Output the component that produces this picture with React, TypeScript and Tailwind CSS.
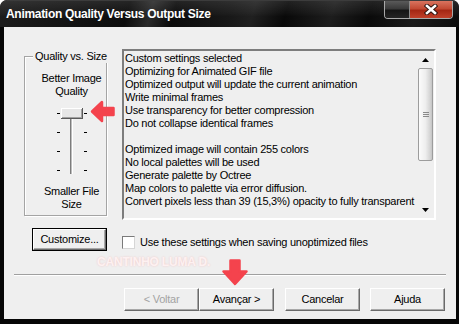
import React from "react";

function Btn({
  children,
  disabled,
  className = "",
}: {
  children: React.ReactNode;
  disabled?: boolean;
  className?: string;
}) {
  return (
    <div
      className={`h-[23px] w-[75px] flex items-center justify-center bg-[#efefef] border border-t-white border-l-white border-r-[#6a6a6a] border-b-[#6a6a6a] shadow-[inset_-1px_-1px_0_#a8a8a8] ${
        disabled ? "text-[#a3a3a3]" : "text-black"
      } ${className}`}
    >
      {children}
    </div>
  );
}

const lines = [
  "Custom settings selected",
  "Optimizing for Animated GIF file",
  "Optimized output will update the current animation",
  "Write minimal frames",
  "Use transparency for better compression",
  "Do not collapse identical frames",
  "",
  "Optimized image will contain 255 colors",
  "No local palettes will be used",
  "Generate palette by Octree",
  "Map colors to palette via error diffusion.",
  "Convert pixels less than 39 (15,3%) opacity to fully transparent",
];

export default function App() {
  return (
    <div className="w-[459px] h-[324px] bg-[#060606] rounded-t-[7px] flex flex-col relative overflow-hidden font-[family-name:'Liberation_Sans',Arial,sans-serif] text-[11px] leading-[13px] tracking-[-0.25px] text-black">
      {/* Title bar */}
      <div className="h-[27px] shrink-0 flex items-start justify-between rounded-t-[7px] bg-[linear-gradient(180deg,rgba(255,255,255,0.10)_0%,rgba(255,255,255,0.03)_45%,rgba(0,0,0,0)_60%),linear-gradient(105deg,#1c1c1c_0%,#0d0d0d_28%,#2a2a2a_33%,#0b0b0b_38%,#181818_50%,#202020_55%,#090909_62%,#1d1d1d_72%,#0a0a0a_80%,#1a1a1a_90%,#0c0c0c_100%)] border-t border-[#3c3c3c]">
        <div className="pl-[6px] pt-[6px] text-white font-bold text-[12px] leading-[14px] tracking-[-0.3px] whitespace-nowrap">
          Animation Quality Versus Output Size
        </div>
        <div className="flex mr-[6px] h-[18px] rounded-b-[4px] border border-t-0 border-[#a9a9a9] overflow-hidden">
          <div className="w-[25px] bg-[linear-gradient(180deg,#5a5a5a_0%,#3a3a3a_45%,#151515_55%,#242424_100%)] border-r border-[#8a8a8a]" />
          <div className="w-[42px] flex items-center justify-center bg-[linear-gradient(180deg,#d9745f_0%,#c24a33_45%,#a52714_55%,#c0402a_100%)]">
            <svg width="14" height="11" viewBox="0 0 14 11">
              <path d="M3 2 L11 9 M11 2 L3 9" stroke="#2a120e" strokeWidth="4.4" strokeLinecap="square" />
              <path d="M3 2 L11 9 M11 2 L3 9" stroke="#ffffff" strokeWidth="2.6" strokeLinecap="square" />
            </svg>
          </div>
        </div>
      </div>

      {/* Client area */}
      <div className="ml-[4px] mr-[3px] mb-[5px] flex-1 bg-[#efefef] flex flex-col relative">
        <div className="pt-[22px] pl-[20px] flex items-start">
          {/* Group box */}
          <div className="relative mt-[7px] w-[83px] h-[160px] border border-[#a4a4a4] shadow-[inset_1px_1px_0_#ffffff,1px_1px_0_#ffffff]">
            <div className="absolute left-[8px] -top-[7px] px-[2px] bg-[#efefef] whitespace-nowrap">Quality vs. Size</div>
            <div className="pl-[12px] pt-[15px] flex flex-col items-center text-center whitespace-nowrap">
              <div>Better Image</div>
              <div>Quality</div>
              <svg width="32" height="67" viewBox="0 0 32 67" className="mt-[10px]" shapeRendering="crispEdges">
                {[5, 24, 43, 62].map((y) => (
                  <g key={y}>
                    <rect x="1" y={y} width="3" height="1" fill="#000" />
                    <rect x="28" y={y} width="3" height="1" fill="#000" />
                  </g>
                ))}
                <rect x="14" y="10" width="1" height="56" fill="#7c7c7c" />
                <rect x="15" y="10" width="1" height="56" fill="#bdbdbd" />
                <rect x="16" y="10" width="1" height="56" fill="#ffffff" />
                <rect x="5" y="0" width="22" height="11" fill="#e6e6e6" />
                <rect x="5" y="0" width="22" height="1" fill="#ffffff" />
                <rect x="5" y="0" width="1" height="11" fill="#ffffff" />
                <rect x="5" y="10" width="22" height="1" fill="#5a5a5a" />
                <rect x="26" y="0" width="1" height="11" fill="#5a5a5a" />
                <rect x="6" y="9" width="20" height="1" fill="#a0a0a0" />
                <rect x="25" y="1" width="1" height="9" fill="#a0a0a0" />
              </svg>
              <div className="mt-[10px]">Smaller File</div>
              <div>Size</div>
            </div>
          </div>

          {/* List box */}
          <div className="ml-[15px] w-[314px] h-[171px] flex border-2 border-t-[#7d7d7d] border-l-[#7d7d7d] border-r-white border-b-white">
            <div className="flex-1 pt-[1px] pl-[1px] whitespace-nowrap overflow-hidden">
              {lines.map((l, i) => (
                <div key={i} className="h-[13px]">
                  {l}
                </div>
              ))}
            </div>
            <div className="w-[17px] flex flex-col">
              <div className="h-[17px] flex items-center justify-center">
                <svg width="7" height="4" viewBox="0 0 7 4">
                  <path d="M3.5 0 L7 4 L0 4 Z" fill="#000" />
                </svg>
              </div>
              <div className="mx-[1px] h-[93px] rounded-[2px] border border-[#9c9c9c] bg-[linear-gradient(90deg,#fbfbfb_0%,#eeeeee_50%,#d4d4d4_85%,#c4c4c4_100%)] flex items-center justify-center">
                <div className="flex flex-col gap-[1px]">
                  <div className="w-[6px] h-[1px] bg-[#8a8a8a]" />
                  <div className="w-[6px] h-[1px] bg-[#8a8a8a]" />
                  <div className="w-[6px] h-[1px] bg-[#8a8a8a]" />
                </div>
              </div>
              <div className="flex-1" />
              <div className="h-[17px] flex items-center justify-center">
                <svg width="7" height="4" viewBox="0 0 7 4">
                  <path d="M0 0 L7 0 L3.5 4 Z" fill="#000" />
                </svg>
              </div>
            </div>
          </div>
        </div>

        {/* Customize row */}
        <div className="mt-[8px] pl-[28px] flex items-start">
          <div className="border border-black">
            <div className="h-[21px] w-[73px] flex items-center justify-center border border-t-white border-l-white border-r-[#6a6a6a] border-b-[#6a6a6a] shadow-[inset_-1px_-1px_0_#a8a8a8]">
              Customize...
            </div>
          </div>
          <div className="ml-[15px] mt-[8px] flex items-center">
            <div className="w-[13px] h-[13px] bg-white border border-t-[#7a7a7a] border-l-[#7a7a7a] border-r-[#d6d6d6] border-b-[#d6d6d6]" />
            <div className="ml-[5px] whitespace-nowrap">Use these settings when saving unoptimized files</div>
          </div>
        </div>

        {/* Watermark */}
        <div className="absolute left-[93px] top-[228px] font-bold text-[12px] leading-[14px] tracking-[-0.2px] whitespace-nowrap text-[#fdf1f1] [text-shadow:0_0_2px_#f0c4c4]">
          CANTINHO LUMA D.
        </div>

        {/* Separator */}
        <div className="mt-[23px] mx-[10px] h-[2px] border-t border-[#a0a0a0] border-b border-b-white" />

        {/* Buttons */}
        <div className="mt-[12px] pr-[11px] flex justify-end whitespace-nowrap">
          <Btn disabled>&lt; Voltar</Btn>
          <Btn>Avançar &gt;</Btn>
          <Btn className="ml-[11px]">Cancelar</Btn>
          <Btn className="ml-[10px]">Ajuda</Btn>
        </div>
      </div>

      {/* Red annotation arrows */}
      <svg width="26" height="24" viewBox="0 0 26 24" className="absolute left-[90px] top-[100px]">
        <path
          d="M2 11.5 L12 2 L12 8 L23.5 8 L23.5 15 L12 15 L12 21 Z"
          fill="#f4434d"
          stroke="#f4434d"
          strokeWidth="2.5"
          strokeLinejoin="round"
        />
      </svg>
      <svg width="28" height="28" viewBox="0 0 28 28" className="absolute left-[221px] top-[258px]">
        <path
          d="M14 26 L2.5 13.5 L9.5 13.5 L9.5 2.5 L18.5 2.5 L18.5 13.5 L25.5 13.5 Z"
          fill="#f4434d"
          stroke="#f4434d"
          strokeWidth="2.5"
          strokeLinejoin="round"
        />
      </svg>
    </div>
  );
}
